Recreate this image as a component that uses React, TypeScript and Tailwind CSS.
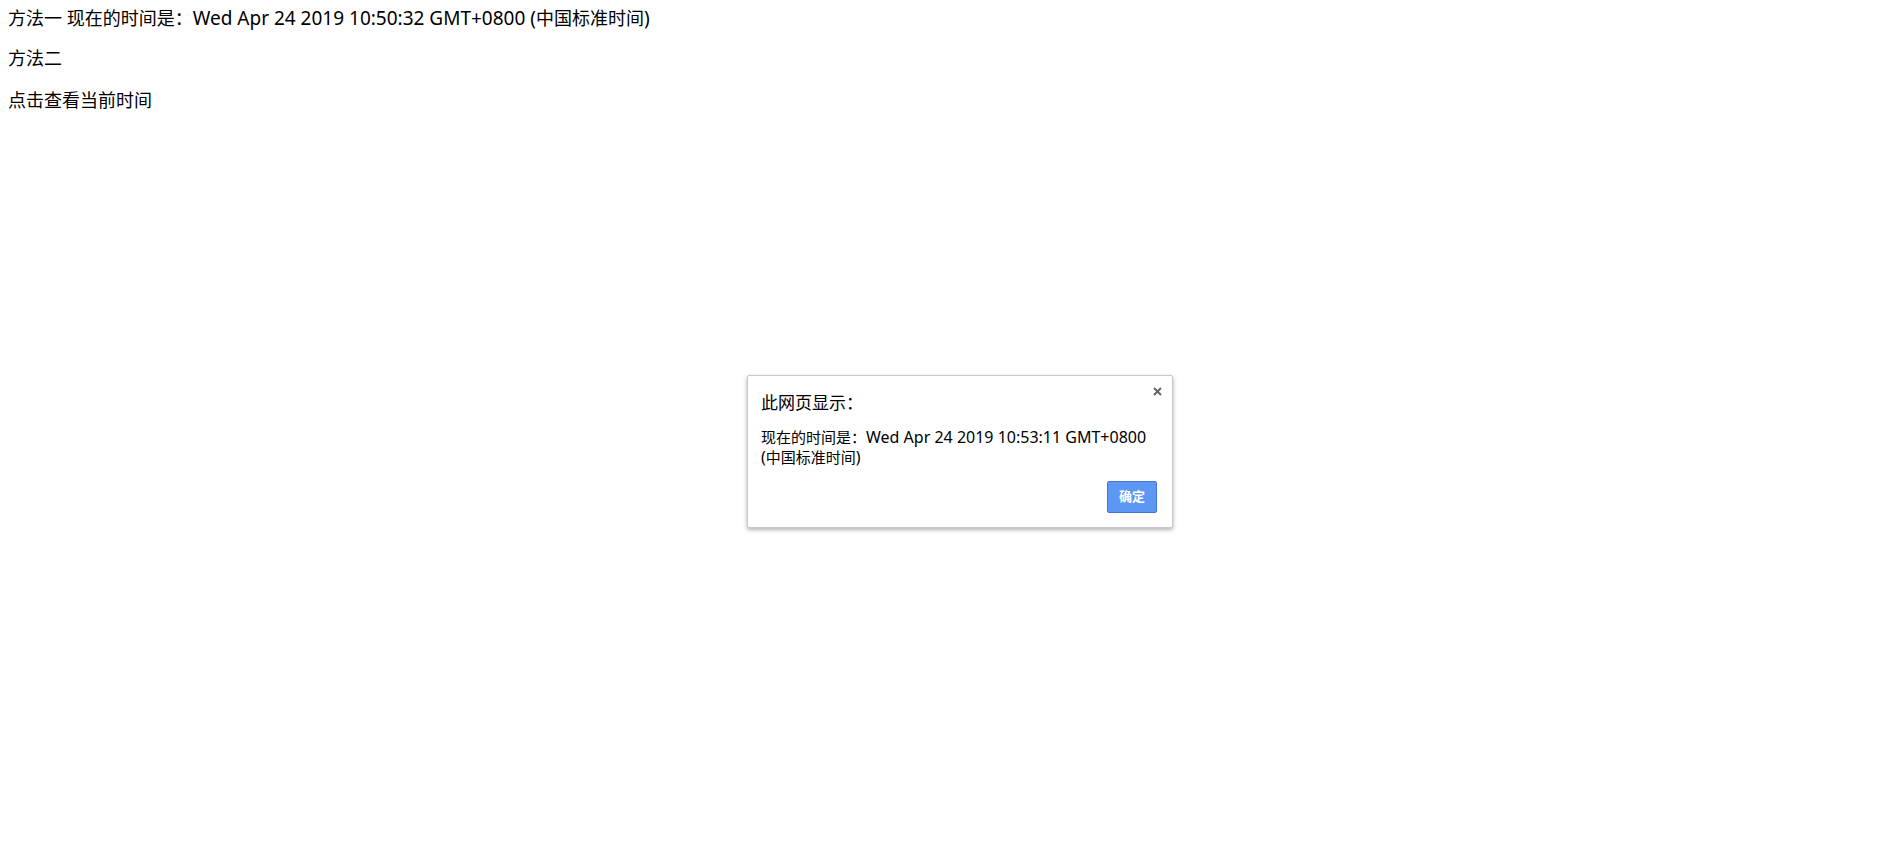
export default function App() {
  return (
    <div className="relative min-h-[853px] bg-white text-black font-['Noto_Sans','Noto_Sans_CJK_SC',sans-serif]">
      {/* page content */}
      <div className="px-2 pt-[6px] text-[18px] leading-[24px]">
        <div>
          方法一 现在的时间是：<span className="text-[19px]">Wed Apr 24 2019 10:50:32 GMT+0800 (</span>中国标准时间<span className="text-[19px]">)</span>
        </div>
        <p className="mt-[16px]">方法二</p>
        <p className="mt-[18px]">点击查看当前时间</p>
      </div>

      {/* alert dialog */}
      <div className="absolute left-[747px] top-[375px] w-[426px] h-[153px] bg-white border border-[#c8c8c8] rounded-[2px] shadow-[0_2px_4px_rgba(0,0,0,0.3)] px-[13px]">
        <button className="absolute right-[9px] top-[10px] p-[1px]">
          <svg width="9" height="9" viewBox="0 0 9 9">
            <path d="M1 1 L8 8 M8 1 L1 8" stroke="#666" strokeWidth="2" />
          </svg>
        </button>
        <div className="pt-[16px] text-[17px] leading-[22px]">此网页显示：</div>
        <div className="mt-[13px] text-[15px] leading-[20px]">
          <div>
            现在的时间是：<span className="text-[16px]">Wed Apr 24 2019 10:53:11 GMT+0800</span>
          </div>
          <div>
            <span className="text-[16px]">(</span>中国标准时间<span className="text-[16px]">)</span>
          </div>
        </div>
        <div className="flex justify-end mt-[14px] mr-[2px]">
          <button className="w-[50px] h-[32px] bg-[#5c97f6] border border-[#3f76d4] rounded-[2px] text-white text-[13px] font-bold">
            确定
          </button>
        </div>
      </div>
    </div>
  )
}
